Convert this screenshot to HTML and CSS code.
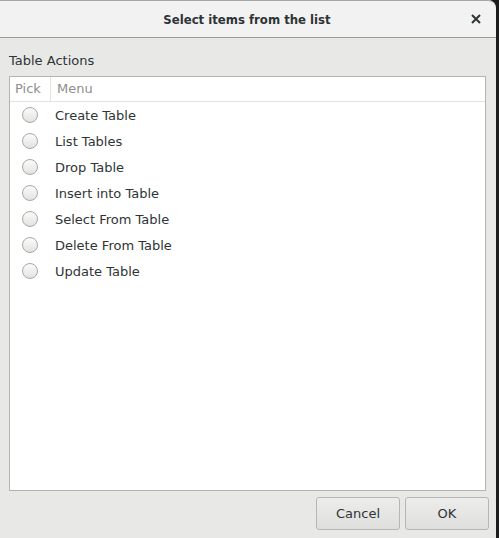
FILE: index.html
```html
<!DOCTYPE html>
<html>
<head>
<meta charset="utf-8">
<link rel="stylesheet" href="styles.css">
</head>
<body>
<div class="window">
  <div class="titlebar">
    <span class="title">Select items from the list</span>
    <span class="close">
      <svg width="10" height="10" viewBox="0 0 10 10"><path d="M1 1 L9 9 M9 1 L1 9" stroke="#2e3436" stroke-width="2"/></svg>
    </span>
  </div>
  <div class="content">
    <div class="label">Table Actions</div>
    <div class="list">
      <div class="head">
        <div class="hcell pick">Pick</div>
        <div class="hcell menu">Menu</div>
      </div>
      <div class="row"><span class="radio"></span><span class="text">Create Table</span></div>
      <div class="row"><span class="radio"></span><span class="text">List Tables</span></div>
      <div class="row"><span class="radio"></span><span class="text">Drop Table</span></div>
      <div class="row"><span class="radio"></span><span class="text">Insert into Table</span></div>
      <div class="row"><span class="radio"></span><span class="text">Select From Table</span></div>
      <div class="row"><span class="radio"></span><span class="text">Delete From Table</span></div>
      <div class="row"><span class="radio"></span><span class="text">Update Table</span></div>
    </div>
  </div>
  <div class="actions">
    <button class="btn">Cancel</button>
    <button class="btn">OK</button>
  </div>
</div>
</body>
</html>
```

FILE: styles.css
```css
html, body {
  margin: 0;
  padding: 0;
  background: #1c1c1c;
  height: 538px;
  overflow: hidden;
}
body {
  font-family: "DejaVu Sans", sans-serif;
  font-size: 13px;
  color: #2e3436;
}
.window {
  width: 496px;
  height: 538px;
  background: #e8e8e7;
  border-top-right-radius: 8px;
  display: flex;
  flex-direction: column;
  overflow: hidden;
}
.titlebar {
  height: 36px;
  flex: none;
  background: #f2f2f2;
  border-top: 1px solid #a6a6a6;
  border-bottom: 1px solid #9c9c9a;
  border-top-right-radius: 8px;
  display: flex;
  align-items: center;
  justify-content: center;
  position: relative;
}
.title {
  font-family: "DejaVu Sans Condensed", "DejaVu Sans", sans-serif;
  font-weight: bold;
  font-size: 13px;
  color: #2e3436;
  margin-left: -2px;
}
.close {
  position: absolute;
  right: 15px;
  top: 13px;
  width: 10px;
  height: 10px;
  display: flex;
}
.content {
  flex: 1;
  display: flex;
  flex-direction: column;
  padding: 13px 10px 0 9px;
}
.label {
  height: 20px;
  line-height: 20px;
  margin-bottom: 5px;
}
.list {
  flex: 1;
  background: #fff;
  border: 1px solid #b4b4b1;
}
.head {
  display: flex;
  height: 24px;
  border-bottom: 1px solid #e2e2e0;
  color: #8d8f8a;
}
.hcell {
  line-height: 23px;
  padding-left: 5px;
}
.pick {
  width: 35px;
  border-right: 1px solid #e2e2e0;
}
.menu {
  padding-left: 6px;
}
.row {
  display: flex;
  align-items: center;
  height: 26px;
}
.radio {
  width: 16px;
  height: 16px;
  margin-left: 12px;
  border-radius: 50%;
  border: 1px solid #a8a8a5;
  box-sizing: border-box;
  background: linear-gradient(#fbfbfb, #e2e2e0);
}
.text {
  margin-left: 17px;
}
.actions {
  flex: none;
  height: 47px;
  display: flex;
  justify-content: flex-end;
  align-items: flex-start;
  gap: 5px;
  padding: 6px 7px 0 0;
  box-sizing: border-box;
}
.btn {
  width: 84px;
  height: 33px;
  font-family: "DejaVu Sans", sans-serif;
  font-size: 13px;
  color: #2e3436;
  border: 1px solid #b6b6b3;
  border-radius: 3px;
  background: linear-gradient(#ededec, #dededd);
  padding: 0;
}
```
